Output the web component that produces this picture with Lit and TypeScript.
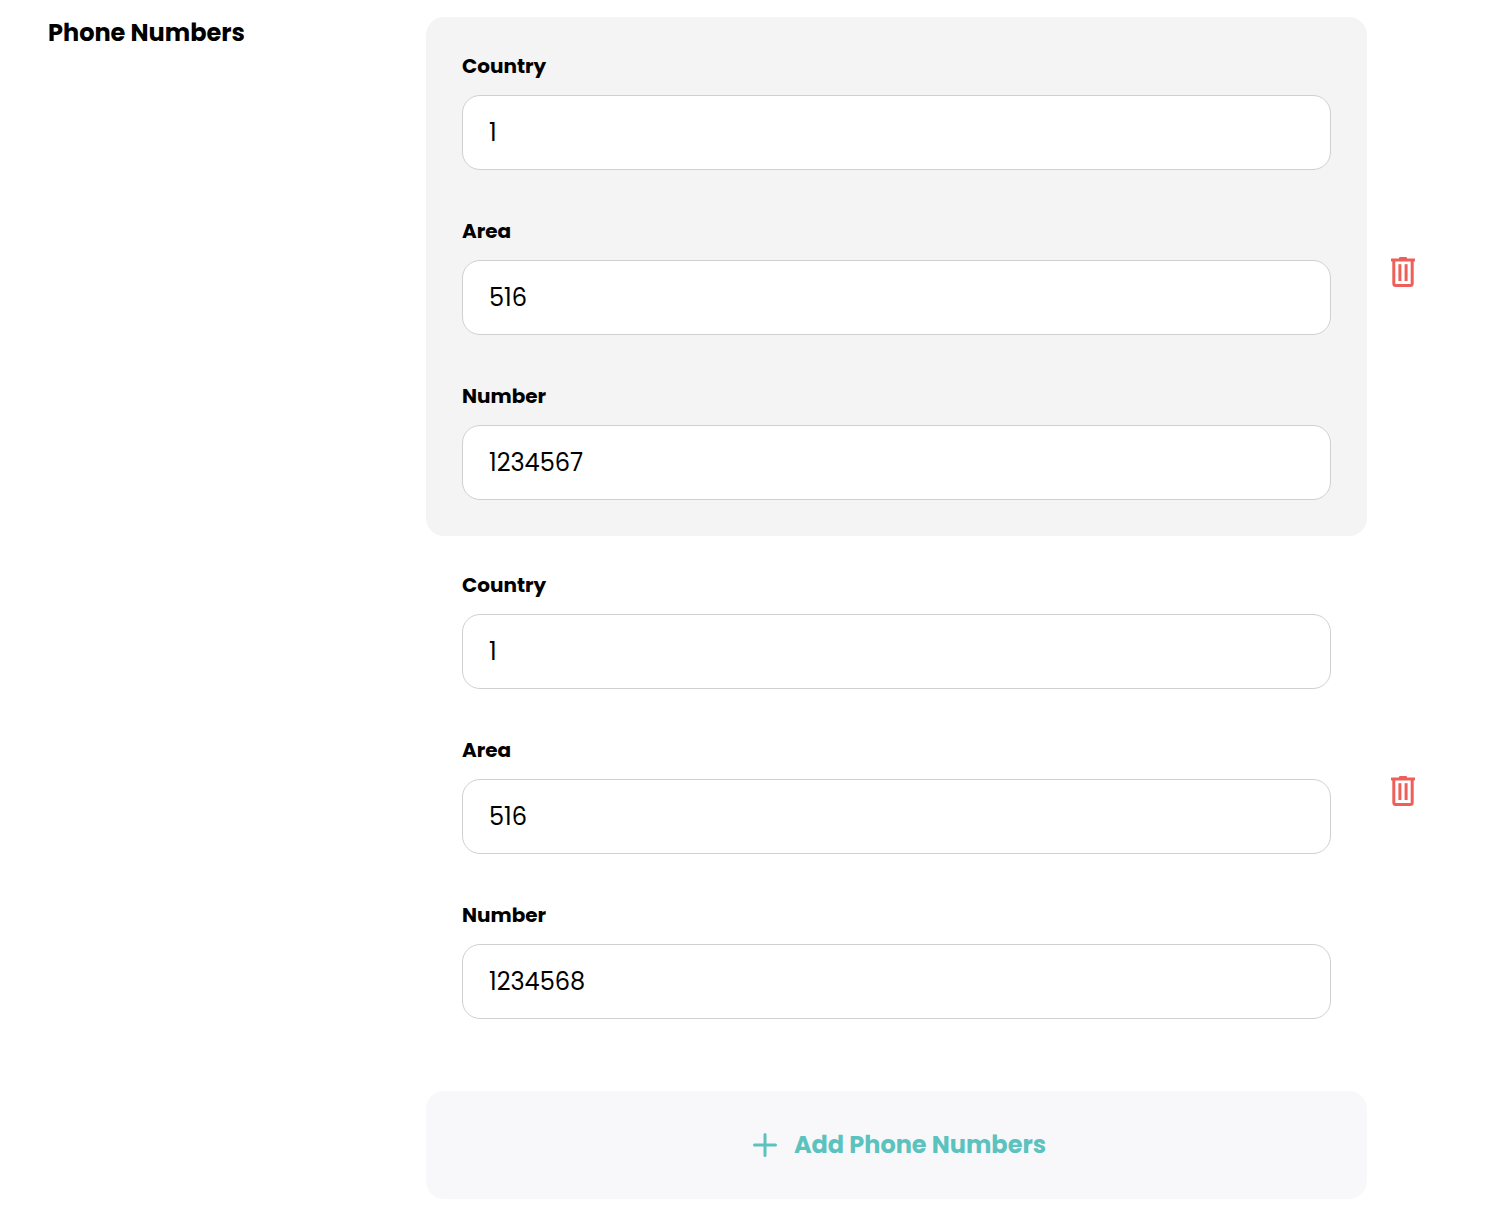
import { LitElement, html, css, svg } from "lit";
import { customElement, property, state } from "lit/decorators.js";

interface Phone {
  id: number;
  country: string;
  area: string;
  number: string;
}

const fields: { key: "country" | "area" | "number"; label: string }[] = [
  { key: "country", label: "Country" },
  { key: "area", label: "Area" },
  { key: "number", label: "Number" },
];

const trashShape = svg`
  <rect x="8" y="0" width="8" height="3" rx="1"></rect>
  <rect x="0" y="1.4" width="24" height="3" rx="0.4"></rect>
  <path d="M2.8 3V26.5Q2.8 28.5 4.8 28.5H19.2Q21.2 28.5 21.2 26.5V3" fill="none" stroke="currentColor" stroke-width="3"></path>
  <rect x="7.4" y="7.2" width="3" height="16.8"></rect>
  <rect x="13.6" y="7.2" width="3" height="16.8"></rect>
`;

@customElement("phone-entry")
export class PhoneEntry extends LitElement {
  @property({ attribute: false }) phone!: Phone;

  static styles = css`
    :host {
      display: grid;
      grid-template-columns: minmax(0, 1fr) 72px;
      align-items: center;
    }
    * {
      box-sizing: border-box;
    }
    .panel {
      display: flex;
      flex-direction: column;
      gap: 48px;
      padding: 36px;
      border-radius: 18px;
    }
    :host(:nth-of-type(odd)) .panel {
      background: #f4f4f4;
    }
    .field {
      display: flex;
      flex-direction: column;
      gap: 16px;
    }
    .label {
      font-size: 20px;
      line-height: 26px;
      font-weight: 700;
    }
    .input {
      width: 100%;
      height: 75px;
      margin: 0;
      padding: 0 26px;
      border: 1px solid #d0d0d0;
      border-radius: 18px;
      background: #fff;
      color: #000;
      font-family: inherit;
      font-size: 24px;
    }
    .remove {
      justify-self: center;
      padding: 0 6px 9px;
      border: 0;
      background: none;
      color: #ef5f5a;
      cursor: pointer;
    }
    .icon {
      display: block;
      width: 24px;
      height: 30px;
      fill: currentColor;
    }
  `;

  render() {
    return html`
      <div class="panel">
        ${fields.map(
          (f) => html`
            <div class="field">
              <label class="label" for=${f.key}>${f.label}</label>
              <input class="input" id=${f.key} type="text" inputmode="numeric" .value=${this.phone[f.key]} />
            </div>
          `
        )}
      </div>
      <button
        class="remove"
        type="button"
        aria-label="Remove"
        @click=${() => this.dispatchEvent(new CustomEvent("remove"))}
      >
        <svg class="icon" viewBox="0 0 24 30" aria-hidden="true">${trashShape}</svg>
      </button>
    `;
  }
}

@customElement("app-root")
export class AppRoot extends LitElement {
  @state() private phones: Phone[] = [
    { id: 1, country: "1", area: "516", number: "1234567" },
    { id: 2, country: "1", area: "516", number: "1234568" },
  ];

  static styles = css`
    :host {
      display: block;
      background: #fff;
      color: #000;
      font-family: Poppins, Inter, "Liberation Sans", sans-serif;
    }
    .section {
      display: grid;
      grid-template-columns: 378px minmax(0, 1fr);
      padding: 17px 51px 23px 48px;
    }
    .title {
      margin: 0;
      font-size: 24px;
      line-height: 32px;
      font-weight: 700;
    }
    .add {
      display: flex;
      align-items: center;
      justify-content: center;
      gap: 11px;
      width: calc(100% - 72px);
      height: 108px;
      margin: 36px 0 0;
      padding: 0;
      border: 0;
      border-radius: 18px;
      background: #f8f8fb;
      color: #5bc2be;
      font-family: inherit;
      font-size: 24px;
      line-height: 32px;
      font-weight: 700;
      cursor: pointer;
    }
    .plus {
      width: 36px;
      height: 36px;
      fill: none;
      stroke: currentColor;
      stroke-width: 3;
      stroke-linecap: round;
    }
  `;

  private add() {
    const id = Math.max(0, ...this.phones.map((p) => p.id)) + 1;
    this.phones = [...this.phones, { id, country: "", area: "", number: "" }];
  }

  private remove(id: number) {
    this.phones = this.phones.filter((p) => p.id !== id);
  }

  render() {
    return html`
      <section class="section" aria-labelledby="title">
        <h2 class="title" id="title">Phone Numbers</h2>
        <div class="content">
          ${this.phones.map(
            (p) => html`<phone-entry .phone=${p} @remove=${() => this.remove(p.id)}></phone-entry>`
          )}
          <button class="add" type="button" @click=${this.add}>
            <svg class="plus" viewBox="0 0 36 36" aria-hidden="true">
              <path d="M18 7.5V28.5M7.5 18H28.5"></path>
            </svg>
            Add Phone Numbers
          </button>
        </div>
      </section>
    `;
  }
}
